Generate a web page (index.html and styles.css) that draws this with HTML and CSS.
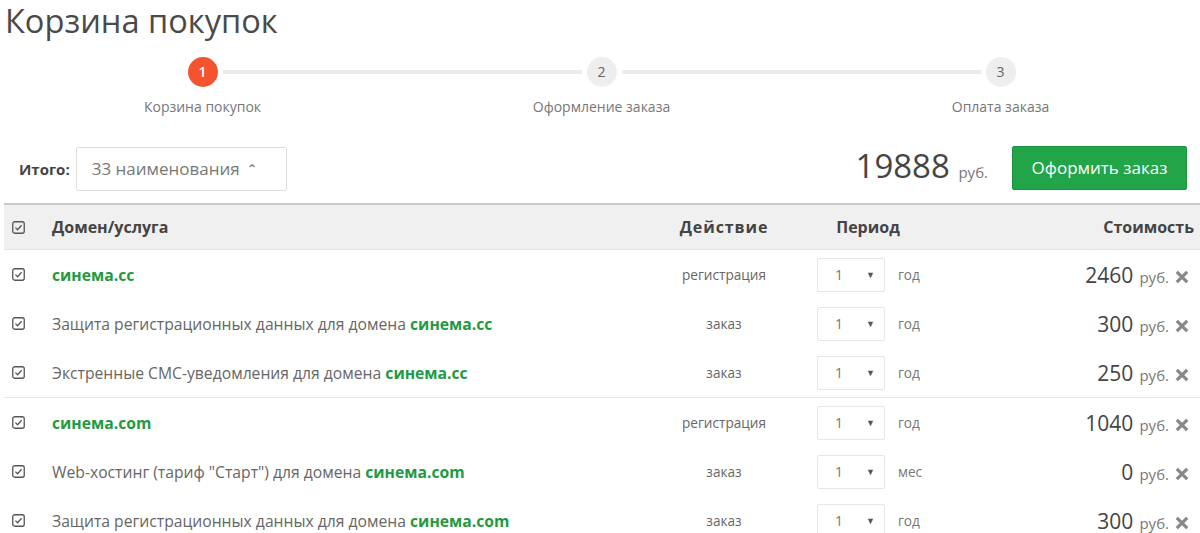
FILE: index.html
```html
<!DOCTYPE html>
<html lang="ru">
<head>
    <meta charset="UTF-8">
    <meta name="viewport" content="width=device-width, initial-scale=1.0">
    <title>Корзина покупок</title>
    <link rel="stylesheet" href="styles.css">
</head>
<body>
    <h1 class="page-title">Корзина покупок</h1>

    <!-- шаги оформления -->
    <div class="steps">
        <div class="step step-active">
            <span class="step-num">1</span>
            <span class="step-label">Корзина покупок</span>
        </div>
        <div class="step">
            <span class="step-num">2</span>
            <span class="step-label">Оформление заказа</span>
        </div>
        <div class="step">
            <span class="step-num">3</span>
            <span class="step-label">Оплата заказа</span>
        </div>
    </div>

    <div class="summary">
        <div class="summary-left">
            <span class="summary-label">Итого:</span>
            <div class="items-toggle">33 наименования <span class="chevron">&#8963;</span></div>
        </div>
        <div class="summary-right">
            <span class="total">19888 <small>руб.</small></span>
            <button class="btn-order">Оформить заказ</button>
        </div>
    </div>

    <table class="cart">
        <colgroup>
            <col class="c-check">
            <col class="c-name">
            <col class="c-action">
            <col class="c-period">
            <col class="c-price">
        </colgroup>
        <thead>
            <tr>
                <th class="cell-check"><svg class="cb" viewBox="0 0 13 13"><rect x="0.75" y="0.75" width="11.5" height="11.5" rx="2"/><path d="M3.4 6.6 L5.6 8.8 L9.6 4.2"/></svg></th>
                <th class="cell-name">Домен/услуга</th>
                <th class="cell-action">Действие</th>
                <th class="cell-period-head">Период</th>
                <th class="cell-price">Стоимость</th>
            </tr>
        </thead>
        <tbody id="cartBody"></tbody>
    </table>

    <script>
        const items = [
            { text: '', domain: 'синема.cc', action: 'регистрация', unit: 'год', price: 2460, group: true },
            { text: 'Защита регистрационных данных для домена ', domain: 'синема.cc', action: 'заказ', unit: 'год', price: 300 },
            { text: 'Экстренные СМС-уведомления для домена ', domain: 'синема.cc', action: 'заказ', unit: 'год', price: 250 },
            { text: '', domain: 'синема.com', action: 'регистрация', unit: 'год', price: 1040, group: true },
            { text: 'Web-хостинг (тариф "Старт") для домена ', domain: 'синема.com', action: 'заказ', unit: 'мес', price: 0 },
            { text: 'Защита регистрационных данных для домена ', domain: 'синема.com', action: 'заказ', unit: 'год', price: 300 }
        ];

        const checkbox = '<svg class="cb" viewBox="0 0 13 13"><rect x="0.75" y="0.75" width="11.5" height="11.5" rx="2"/><path d="M3.4 6.6 L5.6 8.8 L9.6 4.2"/></svg>';
        const cross = '<svg class="remove" viewBox="0 0 14 14"><path d="M1.8 1.8 L12.2 12.2 M12.2 1.8 L1.8 12.2"/></svg>';
        const body = document.getElementById('cartBody');

        items.forEach((item, i) => {
            const row = document.createElement('tr');
            if (item.group && i > 0) row.className = 'group-start';
            row.innerHTML =
                `<td class="cell-check">${checkbox}</td>` +
                `<td class="cell-name">${item.text}<a class="domain">${item.domain}</a></td>` +
                `<td class="cell-action">${item.action}</td>` +
                `<td class="cell-period"><span class="period-select"><span>1</span><span class="arrow">&#9660;</span></span><span class="unit">${item.unit}</span></td>` +
                `<td class="cell-price"><span class="price">${item.price}</span> <span class="currency">руб.</span>${cross}</td>`;
            body.appendChild(row);
        });
    </script>
</body>
</html>
```

FILE: styles.css
```css
body {
    margin: 0;
    padding: 0;
    background-color: #fff;
    font-family: 'Open Sans', 'Noto Sans', sans-serif;
    color: #666;
    overflow: hidden;
}

.page-title {
    margin: 0;
    padding-left: 5px;
    font-size: 32.6px;
    line-height: 42px;
    font-weight: 400;
    color: #4a4a4a;
}

/* шаги */
.steps {
    display: flex;
    margin-left: 3px;
    padding-top: 15px;
}

.step {
    position: relative;
    width: 400px;
    display: flex;
    flex-direction: column;
    align-items: center;
}

.step::before,
.step::after {
    content: '';
    position: absolute;
    top: 13px;
    height: 4px;
    width: 50%;
    background-color: #ebebeb;
}

.step::before { left: 0; }
.step::after { right: 0; }
.step:first-child::before,
.step:last-child::after { display: none; }

.step-num {
    position: relative;
    z-index: 1;
    width: 30px;
    height: 30px;
    border-radius: 50%;
    background-color: #eee;
    box-shadow: 0 0 0 5px #fff;
    color: #666;
    font-size: 14px;
    line-height: 30px;
    text-align: center;
}

.step-active .step-num {
    background-color: #f4532f;
    color: #fff;
    font-weight: 600;
}

.step-label {
    margin-top: 10px;
    font-size: 14px;
    line-height: 20px;
    color: #777;
}

/* итого */
.summary {
    display: flex;
    justify-content: space-between;
    margin-top: 27px;
}

.summary-left {
    display: flex;
    align-items: center;
    padding-left: 19px;
    padding-top: 3px;
    height: 44px;
}

.summary-label {
    font-size: 15px;
    font-weight: 700;
    color: #444;
    margin-right: 6px;
}

.items-toggle {
    box-sizing: border-box;
    width: 211px;
    height: 44px;
    border: 1px solid #ddd;
    border-radius: 2px;
    padding-left: 15px;
    font-size: 17px;
    line-height: 42px;
    color: #777;
}

.chevron {
    display: inline-block;
    margin-left: 3px;
    font-size: 12px;
    font-weight: 700;
    vertical-align: 2px;
    color: #888;
}

.summary-right {
    display: flex;
    align-items: center;
    margin-right: 13px;
}

.total {
    font-size: 33px;
    color: #444;
    margin-right: 24px;
    margin-top: -4px;
}

.total small {
    font-size: 15px;
    color: #777;
}

.btn-order {
    width: 175px;
    height: 44px;
    border: 1px solid #1c9440;
    border-radius: 2px;
    background-color: #21a548;
    color: #fff;
    font-family: inherit;
    font-size: 17px;
}

/* таблица */
.cart {
    width: calc(100% - 4px);
    margin: 12px 0 0 4px;
    border-collapse: collapse;
    table-layout: fixed;
    font-size: 15.7px;
}

.c-check { width: 36px; }
.c-name { width: 620px; }
.c-action { width: 128px; }
.c-period { width: 160px; }
.c-price { width: 252px; }

.cart thead tr {
    background-color: #f0f0f0;
    border-top: 2px solid #c9c9c9;
    border-bottom: 1px solid #e3e3e3;
}

.cart th {
    height: 44px;
    padding: 0;
    font-size: 16px;
    font-weight: 700;
    color: #444;
}

.cart td {
    height: 49px;
    padding: 0;
}

.cart tr.group-start {
    border-top: 1px solid #e6e6e6;
}

.cell-check {
    padding-left: 8px !important;
    text-align: left;
    line-height: 0;
}

.cb {
    width: 13px;
    height: 13px;
    fill: none;
    stroke: #555;
    stroke-width: 1.3;
}

.cell-name {
    padding-left: 12px !important;
    text-align: left;
    color: #666;
}

.domain {
    color: #1f9a43;
    font-weight: 700;
}

.cell-action {
    text-align: center;
    font-size: 13.6px;
    color: #666;
}

.cart th.cell-action {
    font-size: 16px;
    letter-spacing: 0.9px;
}

.cell-period-head {
    text-align: center;
}

.cell-period {
    padding-left: 29px !important;
    font-size: 13.6px;
}

.period-select {
    box-sizing: border-box;
    display: inline-flex;
    justify-content: space-between;
    align-items: center;
    width: 68px;
    height: 34px;
    padding: 0 9px 0 17px;
    border: 1px solid #e6e6e6;
    border-radius: 2px;
    vertical-align: middle;
    color: #777;
    font-size: 14px;
}

.arrow {
    font-size: 9px;
    color: #555;
}

.unit {
    margin-left: 13px;
    color: #777;
    vertical-align: middle;
}

.cell-price {
    text-align: right;
    padding-right: 6px !important;
}

.cart td.cell-price {
    padding-right: 11px !important;
}

.price {
    font-size: 21px;
    color: #444;
}

.currency {
    font-size: 15px;
    color: #777;
    margin-left: 2px;
}

.remove {
    width: 14px;
    height: 14px;
    margin-left: 6px;
    vertical-align: -1px;
    fill: none;
    stroke: #888;
    stroke-width: 3.2;
}
```
